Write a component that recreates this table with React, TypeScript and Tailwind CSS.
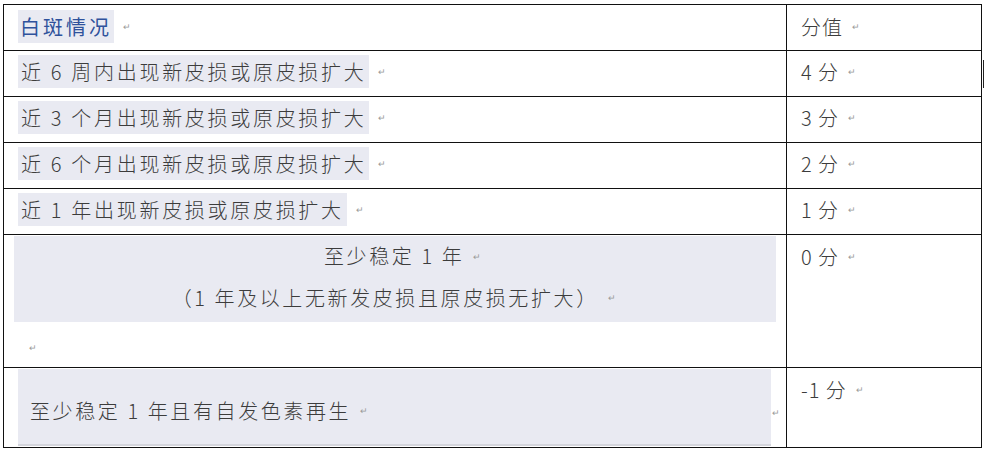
const font = { fontFamily: '"Noto Sans CJK SC", "Noto Sans", sans-serif' };

const Mark = ({ className = "" }: { className?: string }) => (
  <span className={`text-[9px] leading-none text-[#9a9a9a] ml-[9px] ${className}`}>↵</span>
);

interface RowProps {
  label: string;
  score: string;
}

const SimpleRow = ({ label, score }: RowProps) => (
  <div className="flex h-[46px] border-t border-[#111]">
    <div className="w-[783px] border-r border-[#111] pl-[14px] pt-[4px]">
      <span className="inline-flex items-center">
        <span className="bg-[#e9eaf2] px-[3px] leading-[33px] text-[20px] tracking-[2.7px] text-[#3c3c3c]">
          {label}
        </span>
        <Mark />
      </span>
    </div>
    <div className="flex-1 pl-[14px] pt-[4px]">
      <span className="inline-flex items-center leading-[33px] text-[20px] tracking-[1px] text-[#3c3c3c]">
        {score}
        <Mark />
      </span>
    </div>
  </div>
);

export default function App() {
  const rows: RowProps[] = [
    { label: "近 6 周内出现新皮损或原皮损扩大", score: "4 分" },
    { label: "近 3 个月出现新皮损或原皮损扩大", score: "3 分" },
    { label: "近 6 个月出现新皮损或原皮损扩大", score: "2 分" },
    { label: "近 1 年出现新皮损或原皮损扩大", score: "1 分" },
  ];

  return (
    <div className="relative w-[984px] h-[451px] bg-white font-light" style={font}>
      <div className="absolute left-[983px] top-[60px] w-px h-[28px] bg-[#222]" />
      <div className="ml-[3px] pt-[4px]">
        <div className="w-[979px] border border-[#111] flex flex-col">
          {/* header */}
          <div className="flex h-[45px]">
            <div className="w-[783px] border-r border-[#111] pl-[14px] pt-[5px]">
              <span className="inline-flex items-center">
                <span className="bg-[#e9eaf2] px-[2px] leading-[33px] text-[20px] tracking-[3px] text-[#2f529c] font-normal">
                  白斑情况
                </span>
                <Mark />
              </span>
            </div>
            <div className="flex-1 pl-[14px] pt-[5px]">
              <span className="inline-flex items-center leading-[33px] text-[20px] tracking-[1px] text-[#3c3c3c]">
                分值
                <Mark />
              </span>
            </div>
          </div>

          {rows.map((r) => (
            <SimpleRow key={r.label} {...r} />
          ))}

          {/* stable 1 year */}
          <div className="flex h-[133px] border-t border-[#111]">
            <div className="w-[783px] border-r border-[#111] pt-[1px] flex flex-col">
              <div className="mx-[10px] h-[86px] bg-[#e9eaf2] flex flex-col items-center text-[20px] tracking-[2.6px] text-[#3c3c3c]">
                <div className="h-[40px] flex items-center pl-[18px]">
                  至少稳定 1 年
                  <Mark />
                </div>
                <div className="h-[43px] flex items-center">
                  （1 年及以上无新发皮损且原皮损无扩大）
                  <Mark />
                </div>
              </div>
              <div className="pl-[16px] pt-[14px] leading-none">
                <Mark className="ml-0" />
              </div>
            </div>
            <div className="flex-1 pl-[14px] pt-[5px]">
              <span className="inline-flex items-center leading-[33px] text-[20px] tracking-[1px] text-[#3c3c3c]">
                0 分
                <Mark />
              </span>
            </div>
          </div>

          {/* pigment regeneration */}
          <div className="flex h-[80px] border-t border-[#111]">
            <div className="w-[783px] border-r border-[#111] pt-[1px] flex items-start">
              <div className="ml-[14px] w-[753px] h-[77px] bg-[#e9eaf2] border-b-2 border-[#d4d5dc] pl-[12px] pt-[25px]">
                <span className="inline-flex items-center leading-[33px] text-[20px] tracking-[2.6px] text-[#3c3c3c]">
                  至少稳定 1 年且有自发色素再生
                  <Mark />
                </span>
              </div>
              <span className="self-center mt-[10px] ml-[1px] text-[9px] text-[#9a9a9a]">↵</span>
            </div>
            <div className="flex-1 pl-[14px] pt-[5px]">
              <span className="inline-flex items-center leading-[33px] text-[20px] tracking-[1px] text-[#3c3c3c]">
                -1 分
                <Mark />
              </span>
            </div>
          </div>
        </div>
      </div>
    </div>
  );
}
